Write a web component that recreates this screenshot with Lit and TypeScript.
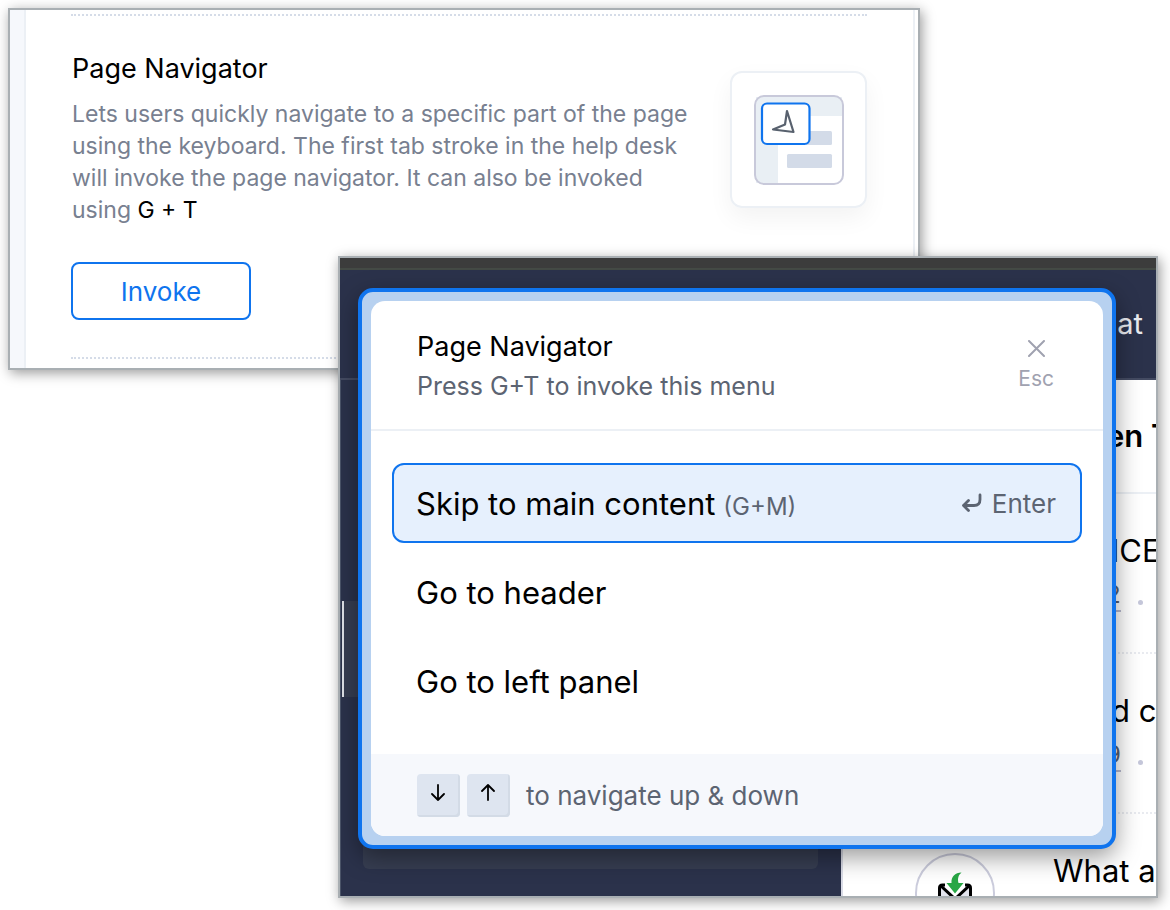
import { LitElement, html, css, nothing } from "lit";
import { customElement, property, state } from "lit/decorators.js";

const FONT = css`
  * { box-sizing: border-box; }
  h2, p, ul, li { margin: 0; padding: 0; }
  ul { list-style: none; }
  button { font: inherit; color: inherit; background: none; border: 0; padding: 0; margin: 0; cursor: pointer; }
  svg { display: block; flex: none; }
`;

@customElement("settings-panel")
class SettingsPanel extends LitElement {
  static styles = [FONT, css`
    :host { display: block; border: 2px solid #a9afb3; background: #fff; box-shadow: 2px 3px 12px rgba(0, 0, 0, .4); }
    .frame { padding: 4px 46px 9px 47px; margin-right: 3px; border-left: 14px solid #f6f8fc; border-right: 2px solid #ecf0f5; box-shadow: inset 2px 0 #ecf0f5; }
    .section { border-top: 2px dotted #d5dce8; border-bottom: 2px dotted #d5dce8; padding: 37px 0; display: flex; justify-content: space-between; align-items: flex-start; }
    .text { padding-left: 1px; }
    .title { font-size: 27px; line-height: 32px; font-weight: 400; color: #000; }
    .desc { margin-top: 13px; max-width: 630px; font-size: 23px; line-height: 32px; color: #788090; }
    .keys { color: #000; }
    .invoke { display: block; width: 180px; height: 58px; margin: 36px 0 0 -1px; border: 2px solid #0f74ee; border-radius: 8px; color: #0f74ee; font-size: 26px; }
    .tile { width: 137px; height: 137px; margin-top: 18px; padding: 22px 0 0 22px; border: 2px solid #ecf0f5; border-radius: 12px; box-shadow: 0 10px 24px rgba(0, 0, 0, .05); }
  `];
  render() {
    return html`
      <div class="frame">
        <section class="section">
          <div class="text">
            <h2 class="title">Page Navigator</h2>
            <p class="desc">Lets users quickly navigate to a specific part of the page using the keyboard. The first tab stroke in the help desk will invoke the page navigator. It can also be invoked using <span class="keys">G + T</span></p>
            <button class="invoke" type="button">Invoke</button>
          </div>
          <div class="tile">
            <svg width="90" height="90" viewBox="0 0 90 90" fill="none">
              <rect x="1" y="1" width="88" height="88" rx="9" fill="#fff" />
              <path d="M2 2H88V21H24V88H2Z" fill="#e9eff4" />
              <rect x="52" y="36" width="26" height="14" rx="1.5" fill="#d3dbe8" />
              <rect x="33" y="59" width="45" height="14" rx="1.5" fill="#d3dbe8" />
              <rect x="1" y="1" width="88" height="88" rx="9" stroke="#c8c9da" stroke-width="2" />
              <rect x="8" y="8.500" width="47.500" height="40.500" rx="5" fill="#fff" stroke="#0f74ee" stroke-width="2.200" />
              <path d="M33 16L39.500 37L19 34.500L31 29.500Z" stroke="#58616e" stroke-width="2.200" stroke-linejoin="round" />
            </svg>
          </div>
        </section>
      </div>`;
  }
}

interface Row { title: string; count?: string; }

@customElement("desk-window")
class DeskWindow extends LitElement {
  static styles = [FONT, css`
    :host { display: block; position: relative; border: 2px solid #a9afb3; background: #fff; box-shadow: 2px 3px 12px rgba(0, 0, 0, .4); white-space: nowrap; }
    .bar { height: 12px; background: #3c3c3c; border-bottom: 2px solid #444a45; }
    .top { height: 110px; background: #2b324b; border-bottom: 2px solid #444b62; padding: 0 13px 2px 0; display: flex; justify-content: flex-end; align-items: center; color: #e9ebf0; font-size: 29px; }
    .body { height: 516px; display: flex; overflow: hidden; }
    .side { flex: 0 0 503px; background: #2b324b; border-left: 1px solid #4b5468; border-right: 2px solid #d9dbe6; padding-top: 221px; }
    .active { height: 96px; margin-left: 1px; background: #373e52; border-left: 2px solid #dfe2e8; }
    .group { height: 100px; margin: 72px 23px 0 22px; background: #373e52; border-radius: 6px; }
    .main { flex: 1; min-width: 0; overflow: hidden; }
    .heading { height: 114px; padding: 36px 0 0 263px; border-bottom: 2px solid #ecf0f5; font-size: 31px; line-height: 40px; font-weight: 600; }
    .row { height: 160px; border-bottom: 2px dotted #e9ebf0; padding: 37px 0 0 72px; display: flex; gap: 59px; }
    .avatar { flex: none; width: 80px; height: 80px; margin: 2px -1px 0 0; border: 2px solid #cbccdc; border-radius: 50%; display: flex; justify-content: center; padding-top: 16px; }
    .info { font-size: 31px; line-height: 40px; color: #000; }
    .partial { padding-left: 58px; }
    .meta { display: flex; align-items: flex-end; gap: 17px; margin: 9px 0 0 -5px; font-size: 24px; line-height: 30px; color: #5b6070; }
    .count { border-bottom: 2px solid #b9bbd0; }
    .dot { width: 5px; height: 5px; margin-bottom: 7px; border-radius: 50%; background: #c5c7da; }
    .popup { position: absolute; top: 30px; left: 18px; right: 40px; }
  `];
  private rows: Row[] = [{ title: "ICE", count: "2" }, { title: "d c", count: "9" }, { title: "What ac" }];
  render() {
    return html`
      <div class="bar"></div>
      <header class="top"><span>at</span></header>
      <div class="body">
        <div class="side"><div class="active"></div><div class="group"></div></div>
        <div class="main">
          <div class="heading">en T</div>
          ${this.rows.map(r => html`
            <div class="row">
              <div class="avatar">
                <svg width="36" height="44" viewBox="0 0 36 44" fill="none">
                  <path d="M2.500 32V17Q2.500 14 5.500 14H30.500Q33.500 14 33.500 17V32Q33.500 36 30 36H6Q2.500 36 2.500 32Z" fill="#e4e5ee" stroke="#000" stroke-width="3" />
                  <path d="M8 12H28V16L18 26L8 16Z" fill="#fff" />
                  <path d="M4 15L18 28L32 15" stroke="#000" stroke-width="3" />
                  <path d="M9.500 12H14.500C14 6 18 1.500 24.500 1.500C21 4.500 20.500 8 21.500 12H26.500L18 22.500Z" fill="#28a745" stroke="#fff" stroke-width="2.500" paint-order="stroke" />
                </svg>
              </div>
              <div class="info ${r.count ? "partial" : ""}">
                <div>${r.title}</div>
                ${r.count ? html`<div class="meta"><span class="count">${r.count}</span><span class="dot"></span></div>` : nothing}
              </div>
            </div>`)}
        </div>
      </div>
      <navigator-menu class="popup"></navigator-menu>`;
  }
}

@customElement("navigator-menu")
class NavigatorMenu extends LitElement {
  static styles = [FONT, css`
    :host { border: 4px solid #0f74ee; border-radius: 15px; background: #b7d1f0; padding: 9px; box-shadow: 0 8px 24px rgba(0, 0, 0, .4); }
    .card { background: #fff; border-radius: 14px; overflow: hidden; }
    .head { display: flex; justify-content: space-between; align-items: flex-start; padding: 30px 49px 23px 46px; border-bottom: 2px solid #ecf0f5; }
    .title { font-size: 27px; line-height: 32px; font-weight: 400; color: #000; }
    .sub { margin-top: 3px; font-size: 25px; line-height: 40px; color: #5c6472; }
    .close { display: flex; flex-direction: column; align-items: center; gap: 10px; margin-top: 9px; font-size: 21px; line-height: 24px; color: #a0a2b0; }
    .list { display: flex; flex-direction: column; gap: 9px; padding: 32px 21px 33px; }
    .item { width: 100%; height: 80px; display: flex; justify-content: space-between; align-items: center; padding: 0 24px 0 22px; border: 2px solid transparent; border-radius: 12px; font-size: 31px; color: #000; text-align: left; }
    .selected { background: #e6f0fd; border-color: #0f74ee; }
    .hint { font-size: 24px; color: #5c6472; margin-left: 8px; }
    .enter { display: flex; align-items: center; gap: 10px; font-size: 26px; color: #5c6472; }
    .foot { display: flex; align-items: center; gap: 7px; height: 82px; padding-left: 46px; background: #f6f8fc; font-size: 26px; color: #5c6472; }
    .key { width: 43px; height: 43px; padding: 0 2px 6px 0; display: grid; place-items: center; border-radius: 4px; background: #dee5f0; box-shadow: inset -2px -2px #d3dbe6; }
    .note { padding-left: 9px; }
  `];
  @property({ type: Number }) selected = 0;
  @state() private items = [
    { label: "Skip to main content", hint: "(G+M)" },
    { label: "Go to header", hint: "" },
    { label: "Go to left panel", hint: "" },
  ];
  render() {
    return html`
      <div class="card">
        <header class="head">
          <div>
            <h2 class="title">Page Navigator</h2>
            <p class="sub">Press G+T to invoke this menu</p>
          </div>
          <button class="close" type="button">
            <svg width="17" height="17" viewBox="0 0 17 17" stroke="#a0a2b0" stroke-width="2" stroke-linecap="round"><path d="M1 1L16 16M16 1L1 16" /></svg>
            <span>Esc</span>
          </button>
        </header>
        <ul class="list">
          ${this.items.map((it, i) => html`
            <li>
              <button type="button" class="item ${i === this.selected ? "selected" : ""}" @click=${() => { this.selected = i; }}>
                <span>${it.label}${it.hint ? html`<span class="hint">${it.hint}</span>` : nothing}</span>
                ${i === this.selected ? html`
                  <span class="enter">
                    <svg width="21" height="20" viewBox="0 0 21 20" fill="none" stroke="#5c6472" stroke-width="2.800" stroke-linecap="round" stroke-linejoin="round"><path d="M19 2V6.500Q19 12.500 13 12.500H2.500M7.500 7.500L2.500 12.500L7.500 17.500" /></svg>
                    <span>Enter</span>
                  </span>` : nothing}
              </button>
            </li>`)}
        </ul>
        <footer class="foot">
          <span class="key"><svg width="14" height="17" viewBox="0 0 14 17" fill="none" stroke="#000" stroke-width="1.800" stroke-linejoin="round" stroke-linecap="round"><path d="M7 1V16M1 10L7 16L13 10" /></svg></span>
          <span class="key"><svg width="14" height="17" viewBox="0 0 14 17" fill="none" stroke="#000" stroke-width="1.800" stroke-linejoin="round" stroke-linecap="round"><path d="M7 16V1M1 7L7 1L13 7" /></svg></span>
          <span class="note">to navigate up &amp; down</span>
        </footer>
      </div>`;
  }
}

@customElement("app-root")
class AppRoot extends LitElement {
  static styles = css`
    :host { display: block; padding: 8px 12px 12px 8px; background: #fff; font-family: Inter, "Open Sans", sans-serif; }
    .settings { margin-right: 238px; }
    .desk { margin: -114px 0 0 330px; }
  `;
  render() {
    return html`
      <settings-panel class="settings"></settings-panel>
      <desk-window class="desk"></desk-window>`;
  }
}
